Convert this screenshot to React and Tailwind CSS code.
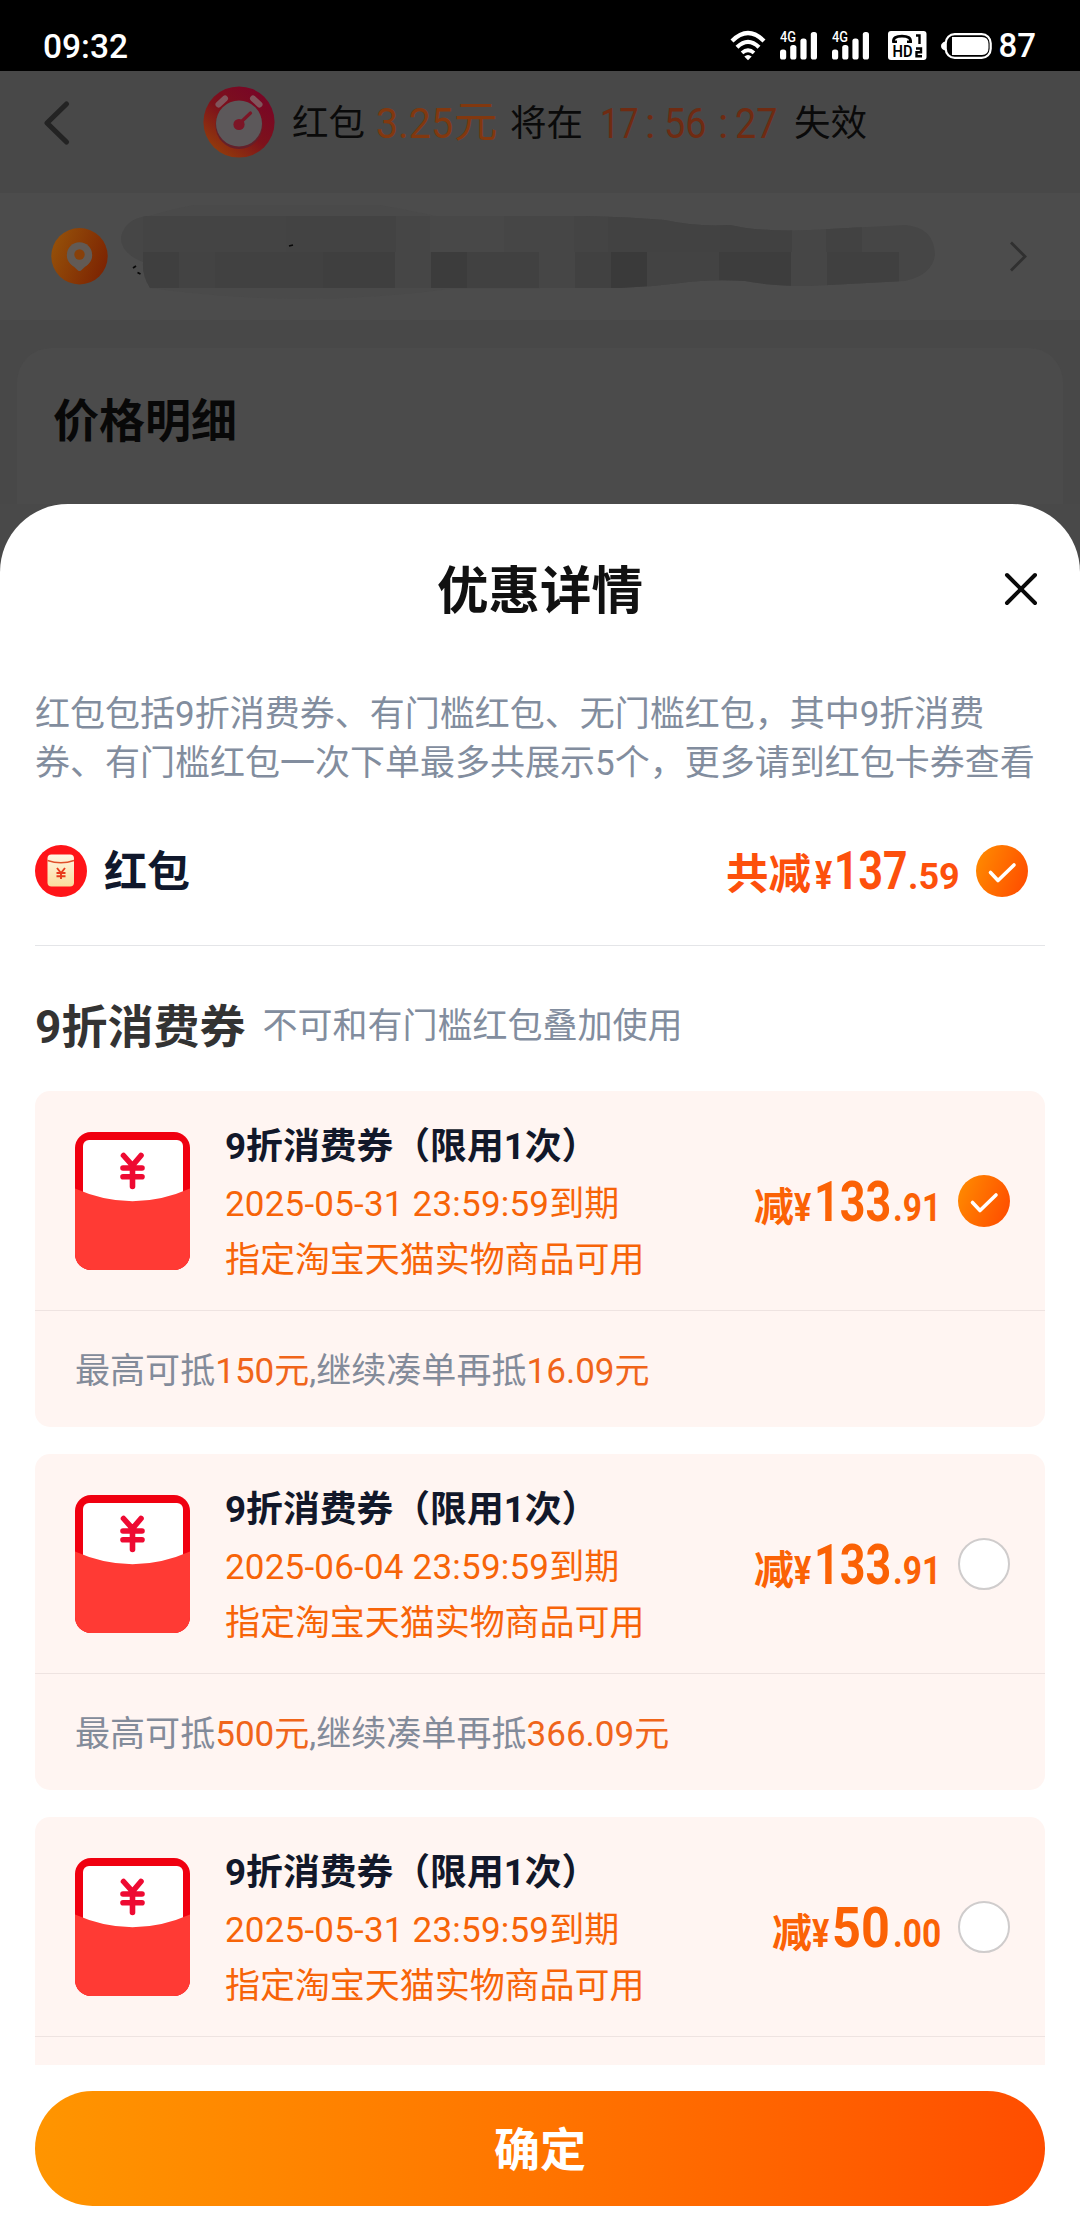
import React from "react";

const sans = "font-['Roboto','Noto_Sans_CJK_SC',sans-serif]";

function Signal() {
  return (
    <svg width="38" height="30" viewBox="0 0 38 30" fill="#fff">
      <text x="0" y="11" fontSize="14.5" fontWeight="500" fontFamily="Roboto, sans-serif" textLength="16" lengthAdjust="spacingAndGlyphs">4G</text>
      <rect x="0" y="18.5" width="6.2" height="10" rx="2.6" />
      <rect x="10.2" y="14" width="6.2" height="14.5" rx="2.6" />
      <rect x="20.4" y="7.5" width="6.2" height="21" rx="2.6" />
      <rect x="30.8" y="1" width="6.2" height="27.5" rx="2.6" />
    </svg>
  );
}

function StatusBar() {
  return (
    <div className="flex h-[71px] items-start bg-black pt-[30px] pr-[44px] pl-[43px] text-white">
      <div className="mt-[1px] text-[33.5px] leading-[32px] font-medium">09:32</div>
      <div className="ml-auto flex items-start">
        <svg width="36" height="31" viewBox="0 0 36 31" fill="none" stroke="#fff" strokeWidth="4.2">
          <path d="M2 11 Q18 -5 34 11" />
          <path d="M7 17.2 Q18 6.5 29 17.2" />
          <path d="M12 22.8 Q18 17.5 24 22.8" strokeWidth="3.8" />
          <path d="M14.3 26.5 Q18 23.5 21.7 26.5 L18 30.3Z" fill="#fff" stroke="none" />
        </svg>
        <div className="mt-[1px] ml-[14px] flex gap-[14px]">
          <Signal />
          <Signal />
        </div>
        <svg className="mt-[1px] ml-[18px]" width="39" height="30" viewBox="0 0 39 30">
          <rect x="0" y="0" width="38.5" height="29" rx="3" fill="#fff" />
          <path d="M5.5 10.5 Q5 5.2 14 5.2 Q23 5.2 22.5 10.5" fill="none" stroke="#000" strokeWidth="2.8" />
          <path d="M4.2 10.8 H9 M19 10.8 H24" fill="none" stroke="#000" strokeWidth="2.6" />
          <text x="4.5" y="25.5" fontSize="16" fontWeight="600" fontFamily="Roboto, sans-serif" textLength="20" lengthAdjust="spacingAndGlyphs">HD</text>
          <path d="M28 4.5 H31.5 V13 M28 17.5 H33 V21.3 H28.5 V25.2 H34" fill="none" stroke="#000" strokeWidth="2.4" />
        </svg>
        <svg className="mt-[3px] ml-[14px]" width="51" height="26" viewBox="0 0 51 26">
          <path d="M4 8.5 Q0 10 0 13 Q0 16 4 17.5Z" fill="#fff" />
          <rect x="4.7" y="1.2" width="45" height="23.6" rx="9" fill="none" stroke="#fff" strokeWidth="2.2" />
          <path d="M11 4 H41 Q47.5 4 47.5 11 V15 Q47.5 22 41 22 H11Z" fill="#fff" />
        </svg>
        <div className="ml-[6px] text-[33px] leading-[32px] font-medium">87</div>
      </div>
    </div>
  );
}

function Countdown() {
  return (
    <div className="flex h-[122px] items-start bg-[#484848] pl-[42px] text-[36.5px] leading-[52px] text-[#0a0a0a]">
      <svg className="mt-[28px]" width="30" height="48" viewBox="0 0 30 48" fill="none" stroke="#232323" strokeWidth="5.2" strokeLinecap="round" strokeLinejoin="round">
        <path d="M24.5 5 L5 24 L24.5 43" />
      </svg>
      <svg className="mt-[15px] ml-[131px]" width="72" height="72" viewBox="0 0 72 72">
        <defs>
          <linearGradient id="timer" x1="0.85" y1="0.1" x2="0.2" y2="0.9">
            <stop offset="0" stopColor="#780526" />
            <stop offset="0.55" stopColor="#7d121b" />
            <stop offset="1" stopColor="#91380c" />
          </linearGradient>
        </defs>
        <circle cx="36" cy="36" r="35.6" fill="url(#timer)" />
        <path d="M15.5 18.5 L22 12.5 M50 12.5 L56.5 18.5" stroke="#80555c" strokeWidth="6" strokeLinecap="round" />
        <circle cx="36" cy="39.5" r="23.5" fill="#64202a" />
        <circle cx="36" cy="37.5" r="23" fill="#5c585a" />
        <path d="M36.5 37.5 L47.5 27" stroke="#7c1526" strokeWidth="3.2" strokeLinecap="round" />
        <circle cx="36" cy="38.5" r="5.6" fill="#7c1526" />
      </svg>
      <div className="mt-[27px] ml-[17px] w-[84px]">红包</div>
      <div className="mt-[26px] w-[78px] origin-left scale-x-[0.92] text-[43px] text-[#82380f]">3.25</div>
      <div className="mt-[26px] w-[56px] text-[43.5px] text-[#82380f]">元</div>
      <div className="mt-[27px] w-[90px]">将在</div>
      <div className="mt-[26px] flex text-[43px] text-[#6f2b12]">
        <div className="w-[45px] origin-left scale-x-[0.8]">17</div>
        <div className="w-[19px]">:</div>
        <div className="w-[54px] origin-left scale-x-[0.88]">56</div>
        <div className="w-[17px]">:</div>
        <div className="w-[59px] origin-left scale-x-[0.88]">27</div>
      </div>
      <div className="mt-[27px]">失效</div>
    </div>
  );
}

function AddressRow() {
  return (
    <div className="flex h-[127px] items-center bg-[#4c4c4c] pl-[51px]">
      <svg width="57" height="57" viewBox="0 0 57 57">
        <defs>
          <linearGradient id="pin" x1="0" y1="0.3" x2="1" y2="0.7">
            <stop offset="0" stopColor="#955009" />
            <stop offset="1" stopColor="#7c2302" />
          </linearGradient>
        </defs>
        <circle cx="28.5" cy="28.3" r="28.2" fill="url(#pin)" />
        <path d="M19.5 35.5 L37.5 35.5 L30 42.5 Q28.5 43.6 27 42.5Z" fill="#625a55" />
        <circle cx="28.5" cy="27" r="12.7" fill="#625a55" />
        <circle cx="28.5" cy="26.5" r="5.2" fill="#88400a" />
      </svg>
      <svg className="ml-[12px]" width="820" height="104" viewBox="0 0 820 104">
        <defs>
          <clipPath id="smudge">
            <path d="M27 11 H465 Q510 12 545 15 Q575 22 610 20 Q640 27 690 25 L785 20 Q814 22 815 50 Q812 70 785 76 L690 81 Q650 81 625 76 Q590 74 560 78 Q530 82 500 83 H30 Q22 70 23 57 Q0 48 1 32 Q5 14 27 11Z" />
          </clipPath>
        </defs>
        <path d="M25 12 Q90 -8 170 -10 Q230 -8 320 12 H420 V84 H330 Q180 104 30 83Z" fill="#4a4a4a" />
        <g clipPath="url(#smudge)">
          <rect width="820" height="104" fill="#464646" />
          <rect x="23" y="11" width="143" height="36" fill="#444444" />
          <rect x="166" y="11" width="110" height="36" fill="#434343" />
          <rect x="310" y="11" width="74" height="36" fill="#484848" />
          <rect x="454" y="11" width="34" height="36" fill="#444444" />
          <rect x="488" y="11" width="112" height="36" fill="#424242" />
          <rect x="600" y="11" width="72" height="36" fill="#414141" />
          <rect x="706" y="11" width="36" height="36" fill="#424242" />
          <rect x="23" y="47" width="36" height="40" fill="#3f3f3f" />
          <rect x="59" y="47" width="36" height="40" fill="#434343" />
          <rect x="95" y="47" width="108" height="40" fill="#414141" />
          <rect x="203" y="47" width="72" height="40" fill="#3f3f3f" />
          <rect x="275" y="47" width="36" height="40" fill="#464646" />
          <rect x="311" y="47" width="36" height="40" fill="#3c3c3c" />
          <rect x="347" y="47" width="72" height="40" fill="#414141" />
          <rect x="455" y="47" width="36" height="40" fill="#414141" />
          <rect x="491" y="47" width="36" height="40" fill="#3a3a3a" />
          <rect x="527" y="47" width="72" height="40" fill="#434343" />
          <rect x="599" y="47" width="72" height="40" fill="#3d3d3d" />
          <rect x="707" y="47" width="72" height="40" fill="#404040" />
        </g>
        <path d="M169 41 L173 40 M13 63 L16 61 M17.5 67.5 L20.5 69" stroke="#080808" strokeWidth="1.8" />
      </svg>
      <svg className="ml-[67px]" width="22" height="34" viewBox="0 0 22 34" fill="none" stroke="#303030" strokeWidth="2.8">
        <path d="M4 2.5 L18 16.5 L4 30.5" />
      </svg>
    </div>
  );
}

function Check() {
  return (
    <svg width="52" height="52" viewBox="0 0 52 52">
      <defs>
        <linearGradient id="tick" x1="0" y1="0.2" x2="1" y2="0.6">
          <stop offset="0" stopColor="#ff8a00" />
          <stop offset="1" stopColor="#ff5000" />
        </linearGradient>
      </defs>
      <circle cx="26" cy="26" r="26" fill="url(#tick)" />
      <path d="M14.5 27.5 L22 35.5 L38 20" fill="none" stroke="#fff" strokeWidth="3.6" strokeLinecap="round" strokeLinejoin="round" />
    </svg>
  );
}

function Envelope() {
  return (
    <svg width="115" height="138" viewBox="0 0 115 138">
      <defs>
        <clipPath id="env">
          <rect width="115" height="138" rx="16" />
        </clipPath>
      </defs>
      <g clipPath="url(#env)">
        <rect width="115" height="138" fill="#f00010" />
        <rect x="8" y="8" width="100" height="70" rx="6" fill="#fff" />
        <path d="M0 56.5 Q57.5 82 115 56.5 V138 H0Z" fill="#ff3a34" />
      </g>
      <path d="M48.5 23.5 L57.5 33.5 L66 23.5 M57.5 33.5 V54.5 M48 36 H67 M48 44.8 H67" fill="none" stroke="#ee0a32" strokeWidth="5.6" strokeLinecap="round" />
    </svg>
  );
}

const coupons = [
  { date: "2025-05-31 23:59:59到期", whole: "133", cents: ".91", w: "w-[79px] scale-x-[0.8]", max: "150元", more: "16.09元", on: true },
  { date: "2025-06-04 23:59:59到期", whole: "133", cents: ".91", w: "w-[79px] scale-x-[0.8]", max: "500元", more: "366.09元", on: false },
  { date: "2025-05-31 23:59:59到期", whole: "50", cents: ".00", w: "w-[61px] scale-x-[0.9]", on: false },
];

function Coupon({ c }) {
  return (
    <div className="h-[336px] shrink-0 rounded-[15px] bg-[#fff5f2]">
      <div className="flex h-[220px] items-center border-b border-[#eee3e1] pr-[35px] pl-[40px]">
        <Envelope />
        <div className="mt-[6px] ml-[35px] text-[35px] text-[#f76408]">
          <div className="text-[36.8px] leading-[58px] font-bold text-[#12182a]">9折消费券（限用1次）</div>
          <div className="leading-[57px] tracking-[0.2px]">{c.date}</div>
          <div className="leading-[56px] tracking-[-0.05px]">指定淘宝天猫实物商品可用</div>
        </div>
        <div className="mt-[9px] ml-auto flex items-baseline font-bold text-[#fb6205]">
          <span className="text-[40px]">减</span>
          <span className="inline-block w-[20px] origin-left scale-x-[0.85] text-[38px]">¥</span>
          <span className={`${c.w} inline-block origin-left text-[56px] leading-[60px]`}>{c.whole}</span>
          <span className="inline-block w-[47px] origin-left scale-x-[0.88] text-[38px]">{c.cents}</span>
        </div>
        <div className="ml-[18px]">
          {c.on ? <Check /> : <div className="h-[52px] w-[52px] rounded-full border-[2.5px] border-[#cfcccc] bg-white" />}
        </div>
      </div>
      {c.max && (
        <div className="flex h-[116px] items-center pt-[5px] pl-[40px] text-[35.05px] text-[#838b9a]">
          <span>最高可抵</span>
          <span className="text-[#f0651a]">{c.max}</span>
          <span>,继续凑单再抵</span>
          <span className="text-[#f0651a]">{c.more}</span>
        </div>
      )}
    </div>
  );
}

function Sheet() {
  return (
    <div className="relative flex h-[1728px] flex-col rounded-t-[68px] bg-white px-[35px]">
      <div className="relative flex h-[170px] items-center justify-center">
        <h1 className="mt-[6px] text-[51.5px] leading-none font-bold text-[#111]">优惠详情</h1>
        <svg className="absolute top-[68px] right-[7px]" width="34" height="34" viewBox="0 0 34 34" stroke="#0a0a0a" strokeWidth="4" strokeLinecap="round">
          <path d="M3 3 L31 31 M31 3 L3 31" />
        </svg>
      </div>
      <p className="mt-[16px] text-[35px] leading-[49px] whitespace-nowrap text-[#828d9e]">
        红包包括9折消费券、有门槛红包、无门槛红包，其中9折消费
        <br />
        券、有门槛红包一次下单最多共展示5个，更多请到红包卡券查看
      </p>
      <div className="mt-[9px] flex h-[149px] items-center border-b border-[#e4e5e8] pr-[17px]">
        <svg width="52" height="52" viewBox="0 0 52 52">
          <defs>
            <linearGradient id="bag" x1="0" y1="0" x2="0" y2="1">
              <stop offset="0" stopColor="#fff6e4" />
              <stop offset="1" stopColor="#fbdc9c" />
            </linearGradient>
          </defs>
          <circle cx="26" cy="26" r="26" fill="#ff1418" />
          <rect x="12.5" y="9.5" width="26.5" height="32" rx="4" fill="url(#bag)" />
          <path d="M12.5 15.5 Q26 20 39 15.5" fill="none" stroke="#e0502a" strokeWidth="1.4" />
          <path d="M22 23 L26 28 L30 23 M26 28 V34 M21.5 28 H30.5 M21.5 31.2 H30.5" fill="none" stroke="#e83a1c" strokeWidth="1.9" />
        </svg>
        <span className="mt-[3px] ml-[17px] text-[43px] font-bold text-[#10182c]">红包</span>
        <div className="mt-[6px] ml-auto flex items-baseline font-bold text-[#fd500c]">
          <span className="text-[42.5px]">共减</span>
          <span className="ml-[4px] inline-block w-[19px] origin-left scale-x-[0.85] text-[38px]">¥</span>
          <span className="inline-block w-[74px] origin-left scale-x-[0.79] text-[54px] leading-[60px]">137</span>
          <span className="inline-block w-[54px] text-[36px]">.59</span>
        </div>
        <div className="ml-[14px]">
          <Check />
        </div>
      </div>
      <div className="flex h-[145px] items-center pt-[18px]">
        <span className="text-[46px] font-bold text-[#333]">9折消费券</span>
        <span className="ml-[17px] text-[35px] text-[#828d9e]">不可和有门槛红包叠加使用</span>
      </div>
      <div className="flex h-[974px] shrink-0 flex-col gap-[27px] overflow-hidden">
        {coupons.map((c, i) => (
          <Coupon key={i} c={c} />
        ))}
      </div>
      <button className="mt-[26px] h-[115px] shrink-0 rounded-full bg-linear-to-r from-[#ff9500] to-[#ff4d00] pt-[3px] text-[46px] font-bold text-white">
        确定
      </button>
    </div>
  );
}

export default function App() {
  return (
    <div className={`${sans} h-[2232px] w-[1080px] overflow-hidden bg-[#484848]`}>
      <StatusBar />
      <Countdown />
      <AddressRow />
      <div className="mx-[17px] mt-[28px] h-[156px] rounded-t-[34px] bg-[#4b4b4b] pt-[45px] pl-[36px]">
        <h2 className="text-[46px] leading-[56px] font-bold text-[#080808]">价格明细</h2>
      </div>
      <div className="bg-[#494949]">
        <Sheet />
      </div>
    </div>
  );
}
